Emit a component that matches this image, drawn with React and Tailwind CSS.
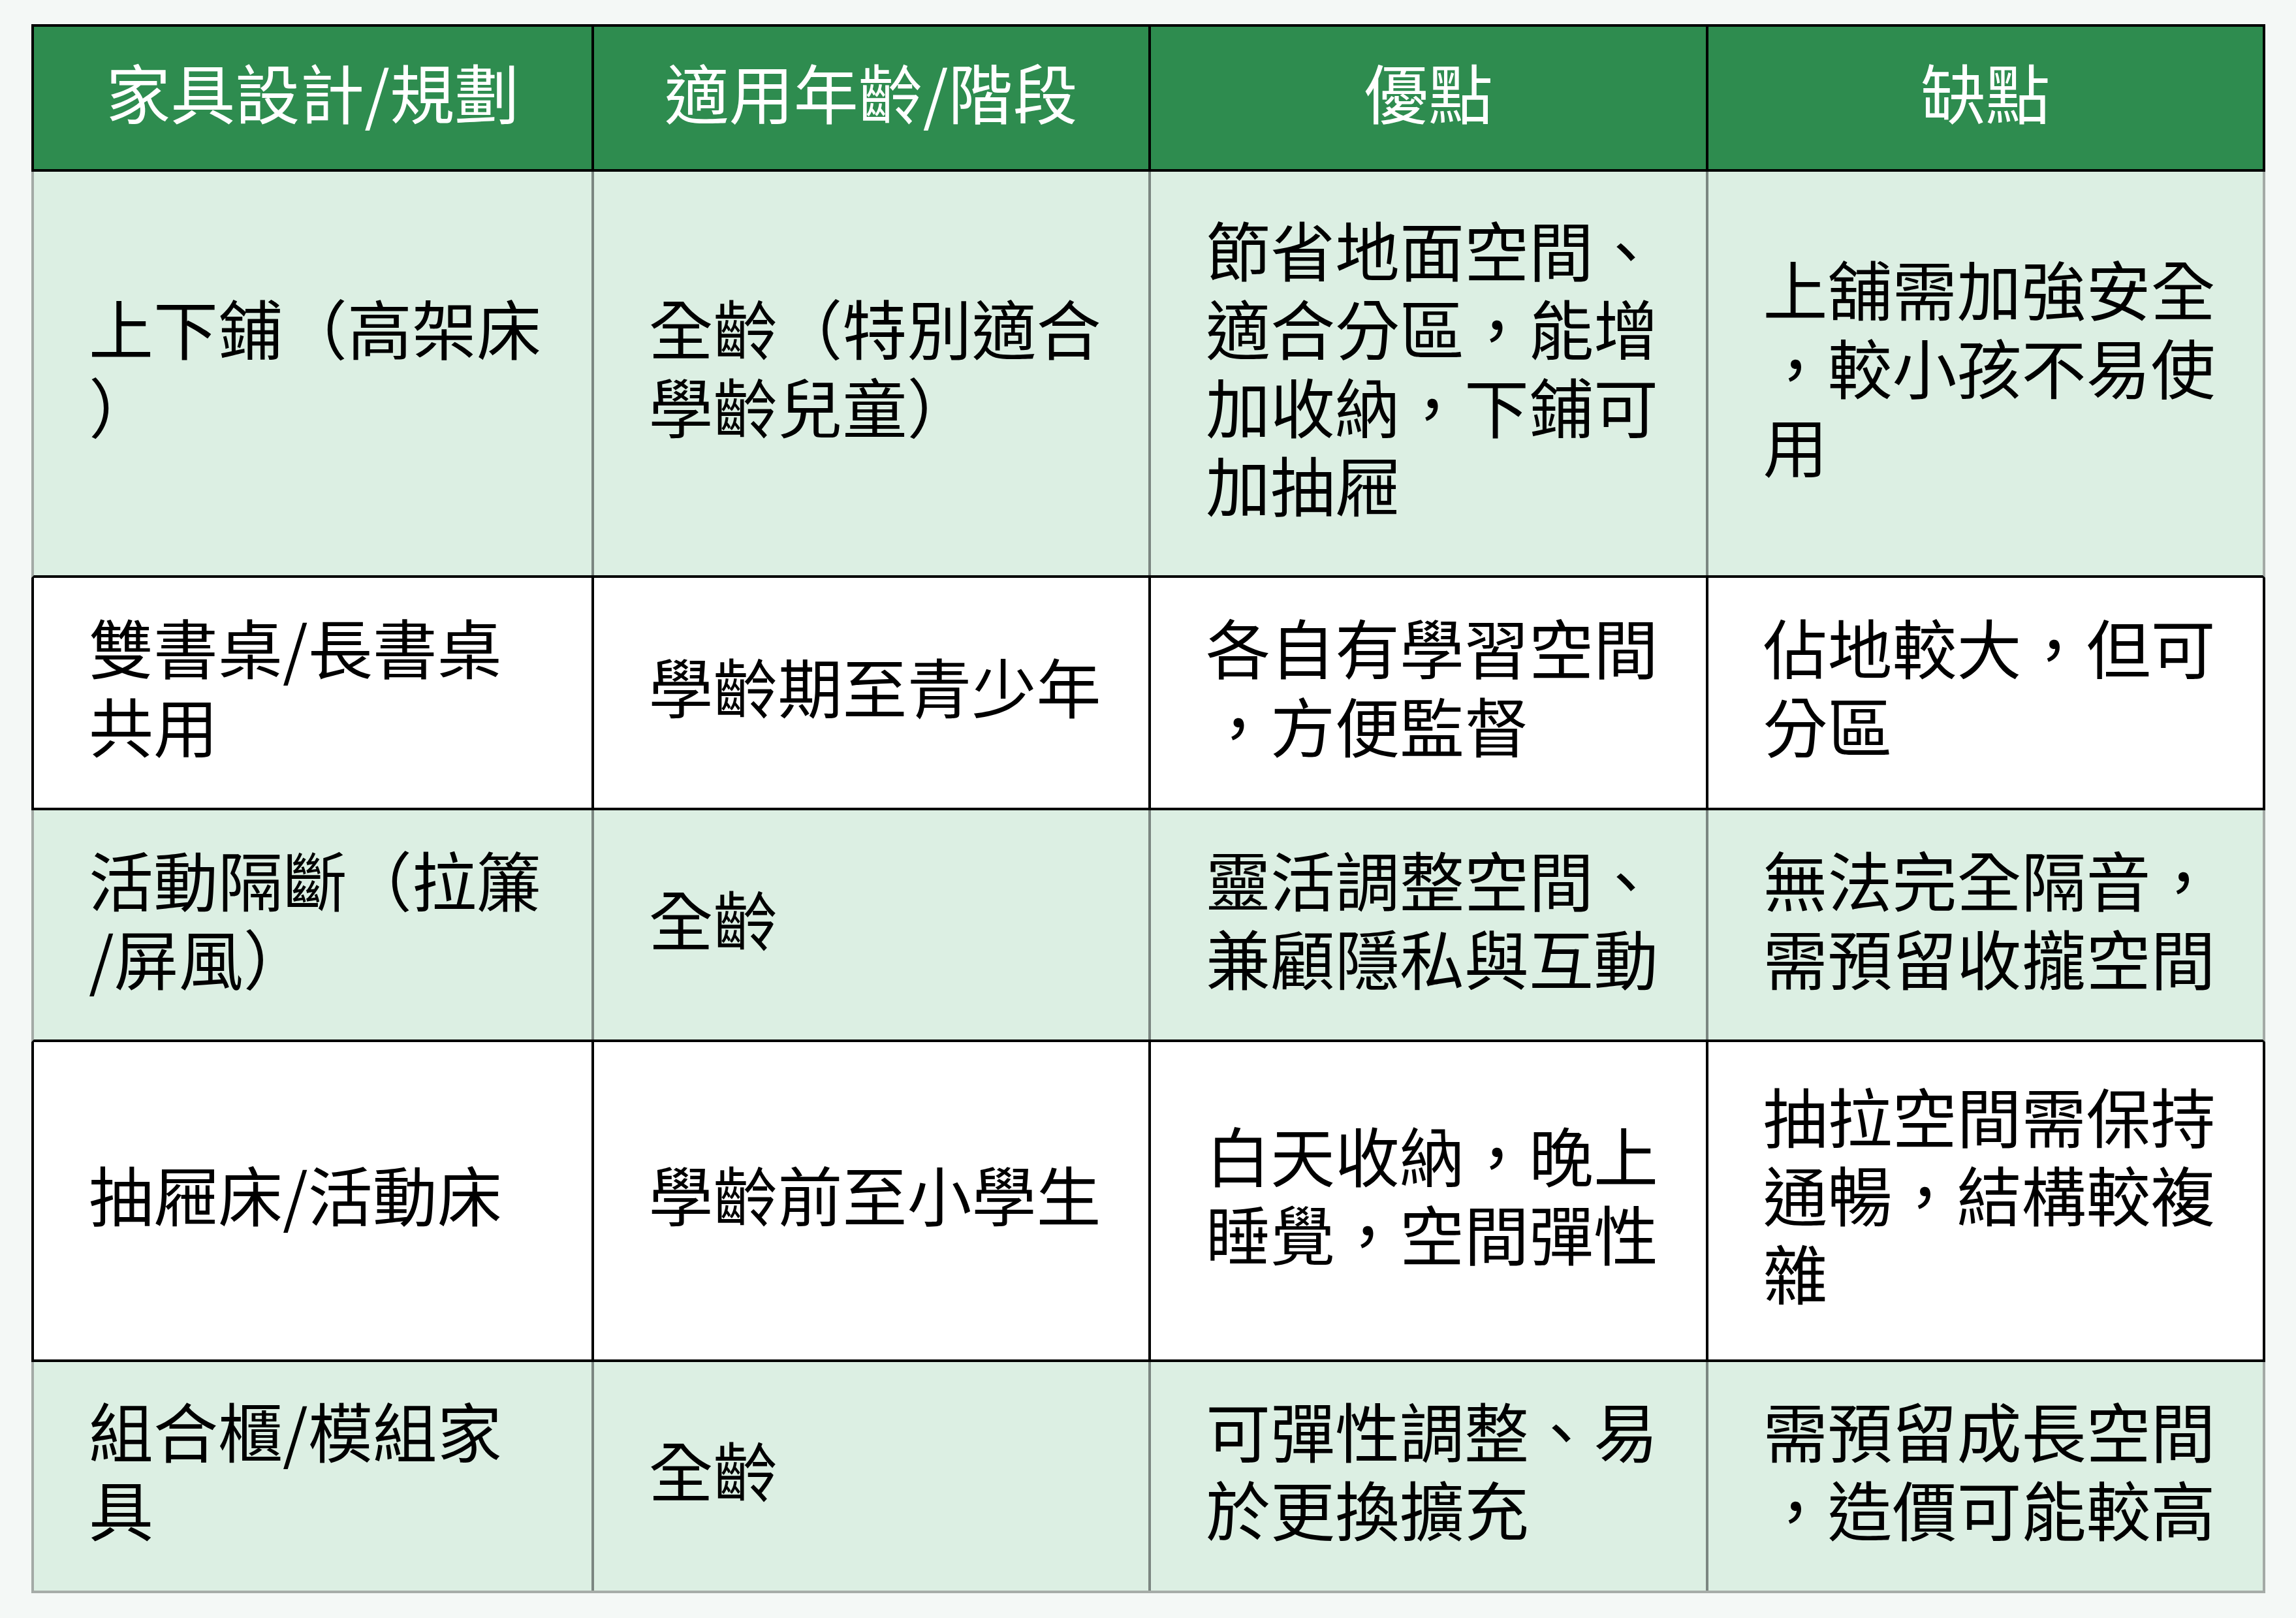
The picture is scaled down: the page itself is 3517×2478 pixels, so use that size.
const headers = ["家具設計/規劃", "適用年齡/階段", "優點", "缺點"];

const rows = [
  {
    green: true,
    h: "h-[622px]",
    cells: [
      ["上下鋪（高架床", "）"],
      ["全齡（特別適合", "學齡兒童）"],
      ["節省地面空間、", "適合分區，能增", "加收納，下鋪可", "加抽屜"],
      ["上舖需加強安全", "，較小孩不易使", "用"],
    ],
  },
  {
    green: false,
    h: "h-[356px]",
    cells: [
      ["雙書桌/長書桌", "共用"],
      ["學齡期至青少年"],
      ["各自有學習空間", "，方便監督"],
      ["佔地較大，但可", "分區"],
    ],
  },
  {
    green: true,
    h: "h-[355px]",
    cells: [
      ["活動隔斷（拉簾", "/屏風）"],
      ["全齡"],
      ["靈活調整空間、", "兼顧隱私與互動"],
      ["無法完全隔音，", "需預留收攏空間"],
    ],
  },
  {
    green: false,
    h: "h-[490px]",
    cells: [
      ["抽屜床/活動床"],
      ["學齡前至小學生"],
      ["白天收納，晚上", "睡覺，空間彈性"],
      ["抽拉空間需保持", "通暢，結構較複", "雜"],
    ],
  },
  {
    green: true,
    last: true,
    h: "h-[354px]",
    cells: [
      ["組合櫃/模組家", "具"],
      ["全齡"],
      ["可彈性調整、易", "於更換擴充"],
      ["需預留成長空間", "，造價可能較高"],
    ],
  },
];

function Lines({ lines }) {
  return (
    <div className="whitespace-nowrap">
      {lines.map((l, i) => (
        <div key={i}>{l}</div>
      ))}
    </div>
  );
}

export default function App() {
  return (
    <div
      className="min-h-screen bg-[#f4f8f6] pt-[37px] pl-[48px] text-[99px] leading-[120px] text-black"
      style={{ fontFamily: '"Noto Sans CJK TC", "Noto Sans", sans-serif' }}
    >
      <div className="w-[3422px]">
        {/* header */}
        <div className="grid grid-cols-4 h-[226px] border-4 border-black bg-[#2e8c4f] text-white">
          {headers.map((t, i) => (
            <div
              key={t}
              className={
                "flex items-center justify-center pb-[22px] " +
                (i > 0 ? "border-l-4 border-black" : "")
              }
            >
              {t}
            </div>
          ))}
        </div>

        {rows.map((r, ri) => (
          <div
            key={ri}
            className={
              "grid grid-cols-4 border-x-4 border-b-4 " +
              r.h +
              " " +
              (r.green
                ? "bg-[#dcefe3] border-x-[#a3aaa6] " +
                  (r.last ? "border-b-[#a6aca8]" : "border-b-black")
                : "bg-white border-x-black border-b-black")
            }
          >
            {r.cells.map((c, ci) => (
              <div
                key={ci}
                className={
                  "flex items-center pl-[84px] pb-[24px] " +
                  (ci > 0
                    ? "border-l-4 " +
                      (r.green ? "border-[#7b8681]" : "border-black")
                    : "")
                }
              >
                <Lines lines={c} />
              </div>
            ))}
          </div>
        ))}
      </div>
    </div>
  );
}
